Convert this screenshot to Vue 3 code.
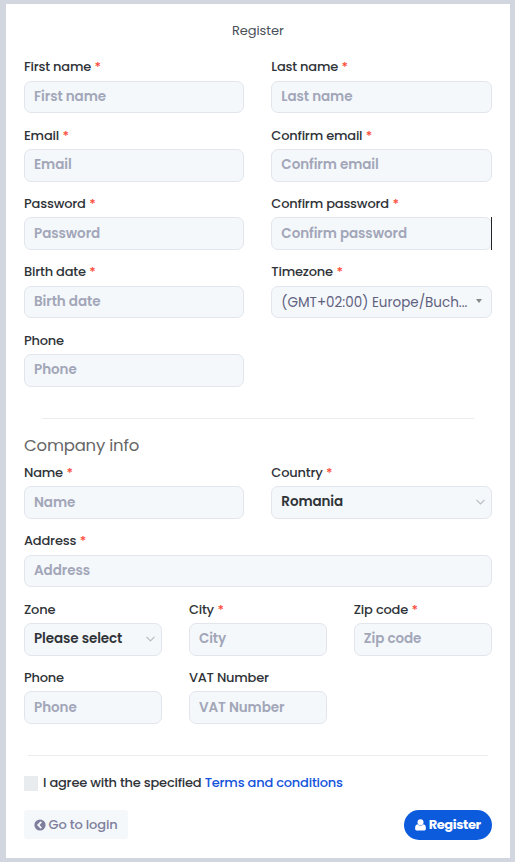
<template>
  <div class="page">
    <form class="register-card" @submit.prevent>
      <h1 class="page-title">Register</h1>

      <div class="form-grid cols-2">
        <div v-for="field in personalFields" :key="field.key" class="form-group">
          <label class="form-label" :for="field.key">
            {{ field.label }} <span v-if="field.required" class="required">*</span>
          </label>
          <div v-if="field.type === 'timezone'" class="form-control timezone">
            <span class="timezone-text">{{ timezone }}</span>
            <span class="caret"></span>
          </div>
          <div v-else class="control-wrap" :class="{ 'has-edge': field.edge }">
            <input :id="field.key" v-model="form[field.key]" class="form-control" :type="field.type || 'text'" :placeholder="field.label" />
          </div>
        </div>
      </div>

      <hr class="divider divider-company" />

      <h2 class="section-title">Company info</h2>

      <div class="form-grid cols-6">
        <div v-for="field in companyFields" :key="field.key" class="form-group" :class="'span-' + field.span">
          <label class="form-label" :for="field.key">
            {{ field.label }} <span v-if="field.required" class="required">*</span>
          </label>
          <div class="control-wrap">
            <template v-if="field.options">
              <select :id="field.key" v-model="form[field.key]" class="form-control">
                <option v-for="option in field.options" :key="option">{{ option }}</option>
              </select>
              <svg class="chevron" width="9" height="6" viewBox="0 0 9 6" fill="none" stroke="currentColor" stroke-width="1.2">
                <polyline points="0.5 0.8 4.5 4.8 8.5 0.8" />
              </svg>
            </template>
            <input v-else :id="field.key" v-model="form[field.key]" class="form-control" type="text" :placeholder="field.label" />
          </div>
        </div>
      </div>

      <hr class="divider divider-terms" />

      <div class="terms">
        <input id="agree" v-model="agree" class="checkbox" type="checkbox" />
        <label for="agree">I agree with the specified <a href="#" @click.prevent>Terms and conditions</a></label>
      </div>

      <div class="actions">
        <button type="button" class="btn btn-login">
          <svg width="12" height="12" viewBox="0 0 12 12">
            <circle cx="6" cy="6" r="5.6" fill="currentColor" />
            <polyline points="7.3 2.9 4.2 6 7.3 9.1" fill="none" stroke="#f4f8fb" stroke-width="1.8" />
          </svg>
          <span>Go to login</span>
        </button>
        <button type="submit" class="btn btn-register">
          <svg width="11" height="12" viewBox="0 0 11 12" fill="currentColor">
            <circle cx="5.5" cy="3.2" r="3" />
            <path d="M2.6 5.3C.8 5.6.1 7.2.1 9.4c0 1.4.8 2.2 2 2.2h6.8c1.2 0 2-.8 2-2.2 0-2.2-.7-3.8-2.5-4.1-.8.9-1.8 1.4-2.9 1.4S3.4 6.2 2.6 5.3z" />
          </svg>
          <span>Register</span>
        </button>
      </div>
    </form>
  </div>
</template>

<script setup>
import { reactive, ref } from 'vue'

const personalFields = [
  { key: 'firstName', label: 'First name', required: true },
  { key: 'lastName', label: 'Last name', required: true },
  { key: 'email', label: 'Email', required: true },
  { key: 'confirmEmail', label: 'Confirm email', required: true },
  { key: 'password', label: 'Password', required: true, type: 'password' },
  { key: 'confirmPassword', label: 'Confirm password', required: true, type: 'password', edge: true },
  { key: 'birthDate', label: 'Birth date', required: true },
  { key: 'timezone', label: 'Timezone', required: true, type: 'timezone' },
  { key: 'phone', label: 'Phone' }
]

const companyFields = [
  { key: 'companyName', label: 'Name', required: true, span: 3 },
  { key: 'country', label: 'Country', required: true, span: 3, options: ['Romania'] },
  { key: 'address', label: 'Address', required: true, span: 6 },
  { key: 'zone', label: 'Zone', span: 2, options: ['Please select'] },
  { key: 'city', label: 'City', required: true, span: 2 },
  { key: 'zip', label: 'Zip code', required: true, span: 2 },
  { key: 'companyPhone', label: 'Phone', span: 2 },
  { key: 'vat', label: 'VAT Number', span: 2 }
]

const timezone = '(GMT+02:00) Europe/Buch...'
const agree = ref(false)
const form = reactive({ country: 'Romania', zone: 'Please select' })
</script>

<style>
body {
  margin: 0;
  background: #d2d6df;
}
</style>

<style scoped>
.page {
  box-sizing: border-box;
  height: 862px;
  padding: 4px 5px 4px 6px;
  background: #d2d6df;
  font-family: Poppins, Inter, "Liberation Sans", sans-serif;
  font-size: 13px;
  color: #343a40;
}

.register-card {
  box-sizing: border-box;
  height: 854px;
  padding: 17px 18.3px 0 18px;
  background: #fff;
}

.page-title {
  margin: 0 0 16.3px;
  font-size: 13px;
  font-weight: 400;
  line-height: 20px;
  letter-spacing: -0.1px;
  text-align: center;
  color: #495057;
}

.form-grid { display: grid; column-gap: 27px; }
.cols-2 { grid-template-columns: 1fr 1fr; }
.cols-6 { grid-template-columns: repeat(6, minmax(0, 1fr)); }
.span-2 { grid-column: span 2; }
.span-3 { grid-column: span 3; }
.span-6 { grid-column: span 6; }

.form-group { height: 68.33px; min-width: 0; }

.form-label {
  display: block;
  height: 19.5px;
  margin-bottom: 4px;
  font-weight: 500;
  line-height: 19.5px;
  letter-spacing: -0.2px;
  white-space: nowrap;
  color: #2f3338;
}
.cols-6 .form-label { margin-bottom: 3.9px; }
.required { margin-left: 0.3px; color: #fd4b38; }

.control-wrap { position: relative; }

.form-control {
  box-sizing: border-box;
  display: block;
  width: 100%;
  height: 32.5px;
  margin: 0;
  padding: 0 9px;
  border: 1px solid #e2e5ec;
  border-radius: 7px;
  background: #f4f8fb;
  font-family: inherit;
  font-size: 13.5px;
  font-weight: 500;
  color: #2f3338;
  outline: none;
  appearance: none;
}
.form-control::placeholder {
  font-weight: 600;
  letter-spacing: -0.07px;
  color: #a2a6b8;
  opacity: 1;
}
.cols-6 .form-control { padding-bottom: 0.2px; }
.cols-6 select.form-control {
  padding-bottom: 1.6px;
  font-weight: 600;
  letter-spacing: -0.1px;
}

.has-edge::after {
  content: '';
  position: absolute;
  top: 0;
  right: 0;
  width: 1px;
  height: 100%;
  background: #212529;
}

.chevron {
  position: absolute;
  right: 7px;
  top: 13px;
  color: #b8bcc2;
  pointer-events: none;
}

.timezone {
  display: flex;
  align-items: center;
  justify-content: space-between;
  padding: 1px 9px 0;
  font-weight: 400;
  color: #5f6080;
}
.timezone-text { white-space: nowrap; }
.caret {
  border: 3px solid transparent;
  border-top: 4px solid #888;
  border-bottom: 0;
  margin-bottom: 3px;
}

.divider {
  height: 1px;
  border: 0;
  background: #ebedef;
}
.divider-company { margin: 19px 18px 15px; }
.divider-terms { margin: 18.5px 4px 19.3px; }

.section-title {
  margin: 0;
  height: 29.1px;
  font-size: 16.5px;
  font-weight: 400;
  line-height: 23px;
  letter-spacing: -0.2px;
  color: #666;
}

.terms {
  display: flex;
  align-items: center;
  gap: 5px;
  height: 16px;
  font-weight: 500;
  letter-spacing: -0.21px;
  color: #2f3338;
}
.terms a { color: #1454dc; text-decoration: none; }
.checkbox {
  width: 14px;
  height: 15px;
  margin: 0;
  background: #e9ecef;
  appearance: none;
}

.actions {
  display: flex;
  align-items: flex-start;
  justify-content: space-between;
  margin-top: 19px;
}
.btn {
  display: flex;
  align-items: center;
  justify-content: center;
  gap: 3px;
  padding: 0;
  border: 0;
  font-family: inherit;
  font-size: 13px;
  letter-spacing: -0.15px;
  white-space: nowrap;
}
.btn-login {
  width: 104px;
  height: 29px;
  padding: 1px 1px 0 0;
  border-radius: 3px;
  background: #f4f8fb;
  font-weight: 500;
  color: #7e7f9c;
}
.btn-register {
  width: 88px;
  height: 30px;
  border-radius: 15px;
  background: #0d5bdd;
  font-weight: 700;
  letter-spacing: -0.4px;
  color: #fff;
}
</style>
